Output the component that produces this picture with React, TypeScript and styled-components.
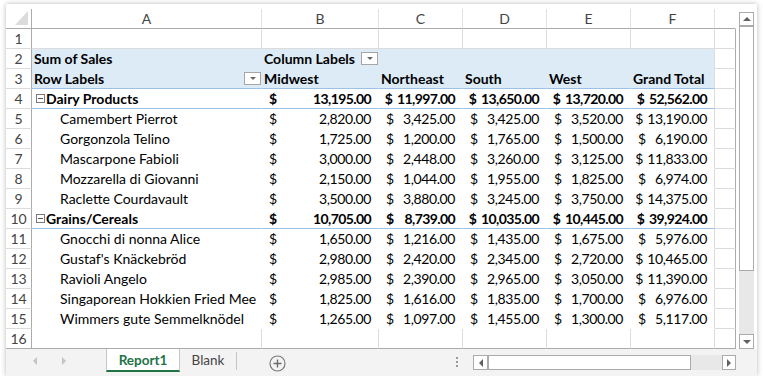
import React from "react";
import styled, { createGlobalStyle } from "styled-components";

const FONT = `Lato, "Liberation Sans", sans-serif`;
const GRID = "#dcdcdc";
const FRAME = "#ababab";
const BLUE_BG = "#ddebf7";
const BLUE_LINE = "#9bc2e6";

const GlobalStyle = createGlobalStyle`
  html, body { margin: 0; padding: 0; background: #fff; }
  body { font-family: ${FONT}; font-size: 14px; color: #000; }
`;

// styled
const Page = styled.div`
  padding: 4px 6px 0;
`;

const Window = styled.div`
  width: 751px;
  height: 372px;
  box-sizing: border-box;
  padding-top: 5px;
  background: #fff;
  box-shadow: 0 0 5px rgba(0, 0, 0, 0.28);
  display: flex;
  flex-direction: column;
`;

const Body = styled.div`
  display: flex;
`;

const Sheet = styled.div`
  display: grid;
  grid-template-columns: 26px 230px 117px 84px 84px 84px 84px 21px;
  grid-auto-rows: 20px;
`;

const Corner = styled.div`
  box-sizing: border-box;
  border-right: 1px solid ${FRAME};
  border-bottom: 1px solid ${FRAME};
  display: flex;
`;

const HeadCell = styled.div<{ $last?: boolean }>`
  box-sizing: border-box;
  display: flex;
  align-items: center;
  justify-content: center;
  color: #444;
  border-right: 1px solid ${(p) => (p.$last ? "transparent" : "#e1e1e1")};
  border-bottom: 1px solid ${FRAME};
`;

const RowNum = styled.div<{ $last?: boolean }>`
  box-sizing: border-box;
  display: flex;
  align-items: center;
  justify-content: center;
  color: #444;
  border-right: 1px solid ${FRAME};
  border-bottom: 1px solid ${(p) => (p.$last ? FRAME : GRID)};
`;

const Cell = styled.div<{
  $bg?: string;
  $rb?: string;
  $bb?: string;
  $pl?: number;
  $bold?: boolean;
}>`
  box-sizing: border-box;
  display: flex;
  align-items: center;
  min-width: 0;
  padding-left: ${(p) => p.$pl ?? 2}px;
  background: ${(p) => p.$bg ?? "#fff"};
  border-right: 1px solid ${(p) => p.$rb ?? "transparent"};
  border-bottom: 1px solid ${(p) => p.$bb ?? "transparent"};
  font-weight: ${(p) => (p.$bold ? 700 : 400)};
  white-space: nowrap;
`;

const MoneyCell = styled(Cell)`
  padding-left: 0;
  padding-right: 7px;
`;

const Lead = styled.span`
  flex: 0 1 7px;
  min-width: 0;
`;

const Dollar = styled.span`
  flex-shrink: 0;
`;

const Fill = styled.span`
  flex: 1 0 4px;
`;

const Num = styled.span<{ $bold?: boolean }>`
  flex-shrink: 0;
  letter-spacing: ${(p) => (p.$bold ? -0.6 : -0.4)}px;
`;

const Dropdown = styled.span`
  margin-left: auto;
  width: 17px;
  height: 13px;
  box-sizing: border-box;
  border: 1px solid #a6a6a6;
  background: #fff;
  display: flex;
  align-items: center;
  justify-content: center;
  &::after {
    content: "";
    border-left: 3px solid transparent;
    border-right: 3px solid transparent;
    border-top: 3px solid #666;
  }
`;

const Collapse = styled.span`
  width: 9px;
  height: 9px;
  box-sizing: border-box;
  border: 1px solid #7a7a7a;
  margin-right: 1px;
  display: flex;
  align-items: center;
  justify-content: center;
  &::after {
    content: "";
    width: 5px;
    height: 1px;
    background: #555;
  }
`;

const VScroll = styled.div`
  width: 21px;
  height: 340px;
  box-sizing: border-box;
  padding: 3px 3px 0;
  display: flex;
  flex-direction: column;
`;

const SBtn = styled.div<{ $h: number; $w?: number }>`
  box-sizing: border-box;
  flex: 0 0 auto;
  height: ${(p) => p.$h}px;
  width: ${(p) => (p.$w ? `${p.$w}px` : "auto")};
  border: 1px solid ${FRAME};
  background: #fff;
  display: flex;
  align-items: center;
  justify-content: center;
`;

const Thumb = styled.div<{ $size: number }>`
  box-sizing: border-box;
  flex: 0 0 ${(p) => p.$size}px;
  border: 1px solid ${FRAME};
  background: #fff;
`;

const Track = styled.div`
  flex: 1;
  background: #e8e8e8;
`;

const Tri = styled.span<{ $dir: "up" | "down" | "left" | "right"; $c?: string }>`
  width: 0;
  height: 0;
  ${(p) => {
    const c = p.$c ?? "#606060";
    switch (p.$dir) {
      case "up":
        return `border-left:4px solid transparent;border-right:4px solid transparent;border-bottom:4px solid ${c};`;
      case "down":
        return `border-left:4px solid transparent;border-right:4px solid transparent;border-top:4px solid ${c};`;
      case "left":
        return `border-top:4px solid transparent;border-bottom:4px solid transparent;border-right:4px solid ${c};`;
      default:
        return `border-top:4px solid transparent;border-bottom:4px solid transparent;border-left:4px solid ${c};`;
    }
  }}
`;

const TabBar = styled.div`
  flex: 1;
  display: flex;
  align-items: flex-start;
  background: #f3f3f3;
  padding-right: 21px;
  font-size: 13.5px;
`;

const Nav = styled.div`
  width: 100px;
  height: 23px;
  display: flex;
  align-items: center;
  padding-left: 27px;
  box-sizing: border-box;
  gap: 25px;
`;

const Tab = styled.div<{ $active?: boolean; $w: number }>`
  width: ${(p) => p.$w}px;
  height: 23px;
  box-sizing: border-box;
  display: flex;
  align-items: center;
  justify-content: center;
  background: ${(p) => (p.$active ? "#fff" : "transparent")};
  border-left: 1px solid ${(p) => (p.$active ? "#c6c6c6" : "transparent")};
  border-right: 1px solid ${(p) => (p.$active ? "#c6c6c6" : "transparent")};
  border-bottom: 2px solid ${(p) => (p.$active ? "#217346" : "transparent")};
  color: ${(p) => (p.$active ? "#217346" : "#444")};
  font-weight: ${(p) => (p.$active ? 700 : 400)};
`;

const TabSep = styled.div`
  width: 1px;
  height: 18px;
  margin-top: 3px;
  background: #c6c6c6;
`;

const AddBtn = styled.div`
  margin: 6px 0 0 32px;
  display: flex;
`;

const Spacer = styled.div`
  flex: 1;
`;

const Dots = styled.div`
  margin-top: 8px;
  display: flex;
  flex-direction: column;
  gap: 2px;
  margin-right: 15px;
  & > span {
    width: 2px;
    height: 2px;
    background: #9a9a9a;
  }
`;

const HScroll = styled.div`
  margin-top: 6px;
  width: 263px;
  height: 15px;
  display: flex;
`;

// data
type Kind = "blank" | "sum" | "labels" | "group" | "item";
interface RowData {
  kind: Kind;
  label?: string;
  vals?: string[];
}

const ROWS: RowData[] = [
  { kind: "blank" },
  { kind: "sum" },
  { kind: "labels" },
  { kind: "group", label: "Dairy Products", vals: ["13,195.00", "11,997.00", "13,650.00", "13,720.00", "52,562.00"] },
  { kind: "item", label: "Camembert Pierrot", vals: ["2,820.00", "3,425.00", "3,425.00", "3,520.00", "13,190.00"] },
  { kind: "item", label: "Gorgonzola Telino", vals: ["1,725.00", "1,200.00", "1,765.00", "1,500.00", "6,190.00"] },
  { kind: "item", label: "Mascarpone Fabioli", vals: ["3,000.00", "2,448.00", "3,260.00", "3,125.00", "11,833.00"] },
  { kind: "item", label: "Mozzarella di Giovanni", vals: ["2,150.00", "1,044.00", "1,955.00", "1,825.00", "6,974.00"] },
  { kind: "item", label: "Raclette Courdavault", vals: ["3,500.00", "3,880.00", "3,245.00", "3,750.00", "14,375.00"] },
  { kind: "group", label: "Grains/Cereals", vals: ["10,705.00", "8,739.00", "10,035.00", "10,445.00", "39,924.00"] },
  { kind: "item", label: "Gnocchi di nonna Alice", vals: ["1,650.00", "1,216.00", "1,435.00", "1,675.00", "5,976.00"] },
  { kind: "item", label: "Gustaf's Knäckebröd", vals: ["2,980.00", "2,420.00", "2,345.00", "2,720.00", "10,465.00"] },
  { kind: "item", label: "Ravioli Angelo", vals: ["2,985.00", "2,390.00", "2,965.00", "3,050.00", "11,390.00"] },
  { kind: "item", label: "Singaporean Hokkien Fried Mee", vals: ["1,825.00", "1,616.00", "1,835.00", "1,700.00", "6,976.00"] },
  { kind: "item", label: "Wimmers gute Semmelknödel", vals: ["1,265.00", "1,097.00", "1,455.00", "1,300.00", "5,117.00"] },
  { kind: "blank" },
];

const LETTERS = ["A", "B", "C", "D", "E", "F", ""];
const HEADS = ["Midwest", "Northeast", "South", "West", "Grand Total"];

const Row: React.FC<{ r: RowData; n: number; last: boolean }> = ({ r, n, last }) => {
  const bottom = last ? FRAME : GRID;
  const tail = <Cell $rb={FRAME} $bb={bottom} />;

  if (r.kind === "blank") {
    return (
      <>
        <RowNum $last={last}>{n}</RowNum>
        {[0, 1, 2, 3, 4, 5].map((i) => (
          <Cell key={i} $rb={GRID} $bb={bottom} />
        ))}
        {tail}
      </>
    );
  }

  const blue = r.kind === "sum" || r.kind === "labels";
  const bg = blue ? BLUE_BG : "#fff";
  const bb = r.kind === "labels" || r.kind === "group" ? BLUE_LINE : undefined;
  const rb = (i: number) => (i === 5 ? GRID : undefined);

  let first: React.ReactNode = null;
  let rest: React.ReactNode[] = [];

  if (r.kind === "sum") {
    first = (
      <Cell $bg={bg} $bold>
        Sum of Sales
      </Cell>
    );
    rest = [0, 1, 2, 3, 4].map((i) => (
      <Cell key={i} $bg={bg} $rb={rb(i + 1)} $bold>
        {i === 0 && (
          <>
            Column Labels
            <Dropdown />
          </>
        )}
      </Cell>
    ));
  } else if (r.kind === "labels") {
    first = (
      <Cell $bg={bg} $bb={bb} $bold>
        Row Labels
        <Dropdown />
      </Cell>
    );
    rest = HEADS.map((h, i) => (
      <Cell key={i} $bg={bg} $bb={bb} $rb={rb(i + 1)} $bold>
        {h}
      </Cell>
    ));
  } else {
    const bold = r.kind === "group";
    first = bold ? (
      <Cell $bb={bb} $pl={4} $bold>
        <Collapse />
        {r.label}
      </Cell>
    ) : (
      <Cell $pl={28}>{r.label}</Cell>
    );
    rest = (r.vals ?? []).map((v, i) => (
      <MoneyCell key={i} $bb={bb} $rb={rb(i + 1)} $bold={bold}>
        <Lead />
        <Dollar>$</Dollar>
        <Fill />
        <Num $bold={bold}>{v}</Num>
      </MoneyCell>
    ));
  }

  return (
    <>
      <RowNum>{n}</RowNum>
      {first}
      {rest}
      {tail}
    </>
  );
};

const CornerMark = () => (
  <svg width="25" height="19" viewBox="0 0 25 19">
    <polygon points="9,16 22,16 22,2" fill="#dcdcdc" />
  </svg>
);

const PlusIcon = () => (
  <svg width="17" height="17" viewBox="0 0 17 17">
    <circle cx="8.5" cy="8.5" r="7.5" fill="none" stroke="#7a7a7a" strokeWidth="1.2" />
    <path d="M8.5 4.5v8M4.5 8.5h8" stroke="#6a6a6a" strokeWidth="1.4" />
  </svg>
);

// Main
const App: React.FC = () => {
  return (
    <>
      <GlobalStyle />
      <Page>
        <Window>
          <Body>
            <Sheet>
              <Corner>
                <CornerMark />
              </Corner>
              {LETTERS.map((l, i) => (
                <HeadCell key={i} $last={i === LETTERS.length - 1}>
                  {l}
                </HeadCell>
              ))}
              {ROWS.map((r, i) => (
                <Row key={i} r={r} n={i + 1} last={i === ROWS.length - 1} />
              ))}
            </Sheet>
            <VScroll>
              <SBtn $h={14}>
                <Tri $dir="up" />
              </SBtn>
              <Thumb $size={245} />
              <Track />
              <SBtn $h={15}>
                <Tri $dir="down" />
              </SBtn>
            </VScroll>
          </Body>
          <TabBar>
            <Nav>
              <Tri $dir="left" $c="#c4c4c4" />
              <Tri $dir="right" $c="#c4c4c4" />
            </Nav>
            <Tab $active $w={74}>
              Report1
            </Tab>
            <Tab $w={56}>Blank</Tab>
            <TabSep />
            <AddBtn>
              <PlusIcon />
            </AddBtn>
            <Spacer />
            <Dots>
              <span />
              <span />
              <span />
            </Dots>
            <HScroll>
              <SBtn $h={15} $w={15}>
                <Tri $dir="left" />
              </SBtn>
              <Thumb $size={203} />
              <Track />
              <SBtn $h={15} $w={14}>
                <Tri $dir="right" />
              </SBtn>
            </HScroll>
          </TabBar>
        </Window>
      </Page>
    </>
  );
};

export default App;
